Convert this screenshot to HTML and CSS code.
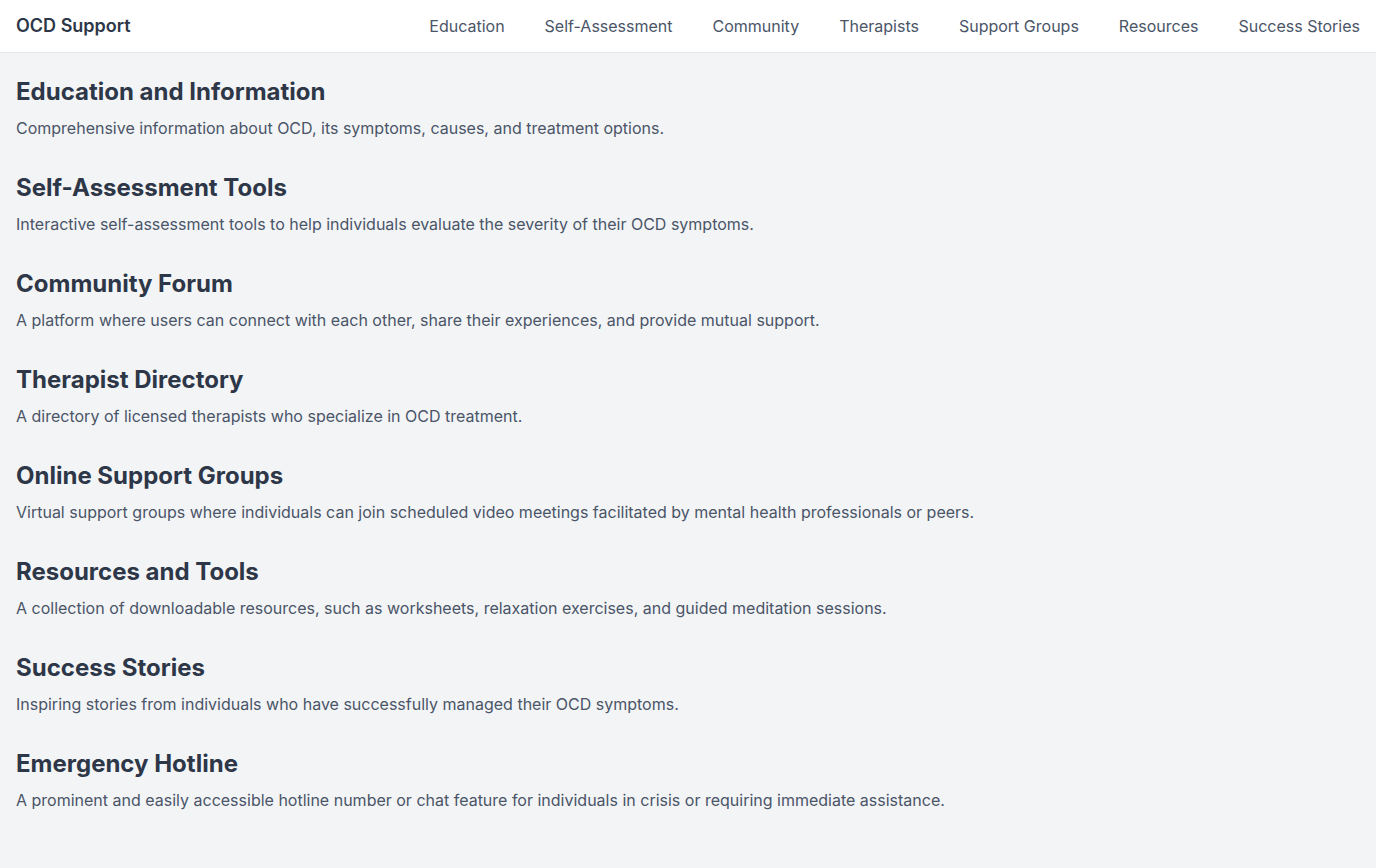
FILE: index.html
```html
<!DOCTYPE html>
<html lang="en">
<head>
<meta charset="utf-8">
<title>OCD Support</title>
<link rel="stylesheet" href="styles.css">
</head>
<body>
<header class="header">
  <div class="logo">OCD Support</div>
  <nav class="nav">
    <a href="#">Education</a>
    <a href="#">Self-Assessment</a>
    <a href="#">Community</a>
    <a href="#">Therapists</a>
    <a href="#">Support Groups</a>
    <a href="#">Resources</a>
    <a href="#">Success Stories</a>
  </nav>
</header>
<main class="main">
  <section class="section">
    <h2>Education and Information</h2>
    <p>Comprehensive information about OCD, its symptoms, causes, and treatment options.</p>
  </section>
  <section class="section">
    <h2>Self-Assessment Tools</h2>
    <p>Interactive self-assessment tools to help individuals evaluate the severity of their OCD symptoms.</p>
  </section>
  <section class="section">
    <h2>Community Forum</h2>
    <p>A platform where users can connect with each other, share their experiences, and provide mutual support.</p>
  </section>
  <section class="section">
    <h2>Therapist Directory</h2>
    <p>A directory of licensed therapists who specialize in OCD treatment.</p>
  </section>
  <section class="section">
    <h2>Online Support Groups</h2>
    <p>Virtual support groups where individuals can join scheduled video meetings facilitated by mental health professionals or peers.</p>
  </section>
  <section class="section">
    <h2>Resources and Tools</h2>
    <p>A collection of downloadable resources, such as worksheets, relaxation exercises, and guided meditation sessions.</p>
  </section>
  <section class="section">
    <h2>Success Stories</h2>
    <p>Inspiring stories from individuals who have successfully managed their OCD symptoms.</p>
  </section>
  <section class="section">
    <h2>Emergency Hotline</h2>
    <p>A prominent and easily accessible hotline number or chat feature for individuals in crisis or requiring immediate assistance.</p>
  </section>
</main>
</body>
</html>
```
FILE: styles.css
```css
* { box-sizing: border-box; }
html, body {
  margin: 0;
  padding: 0;
}
body {
  background: #f3f4f6;
  font-family: Inter, "Noto Sans", sans-serif;
  color: #2d3748;
  min-height: 868px;
}
.header {
  height: 53px;
  background: #ffffff;
  border-bottom: 1px solid #e5e7eb;
  display: flex;
  align-items: center;
  justify-content: space-between;
  padding: 0 16px;
}
.logo {
  font-size: 18px;
  line-height: 28px;
  font-weight: 600;
  color: #2d3748;
}
.nav {
  display: flex;
  gap: 40px;
}
.nav a {
  font-size: 16px;
  line-height: 24px;
  color: #4a5568;
  text-decoration: none;
}
.main {
  padding: 23px 16px 16px;
}
.section {
  margin-bottom: 32px;
}
.section h2 {
  margin: 0 0 8px;
  font-size: 24px;
  line-height: 32px;
  font-weight: 700;
  color: #2d3748;
}
.section p {
  margin: 0;
  font-size: 16px;
  line-height: 24px;
  color: #4a5568;
}
```
